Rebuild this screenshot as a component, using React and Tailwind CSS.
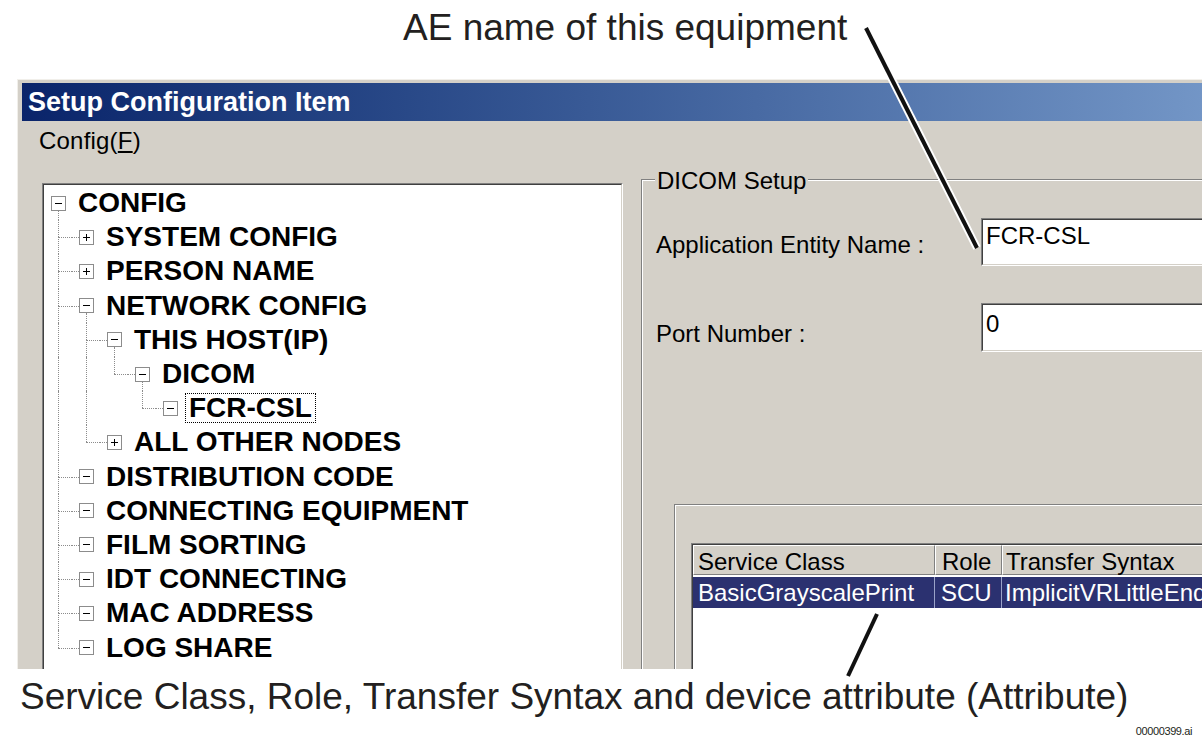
import React from 'react';

const TREE = [
  { d: 0, label: 'CONFIG', plus: false },
  { d: 1, label: 'SYSTEM CONFIG', plus: true },
  { d: 1, label: 'PERSON NAME', plus: true },
  { d: 1, label: 'NETWORK CONFIG', plus: false },
  { d: 2, label: 'THIS HOST(IP)', plus: false },
  { d: 3, label: 'DICOM', plus: false },
  { d: 4, label: 'FCR-CSL', plus: false, focus: true },
  { d: 2, label: 'ALL OTHER NODES', plus: true },
  { d: 1, label: 'DISTRIBUTION CODE', plus: false },
  { d: 1, label: 'CONNECTING EQUIPMENT', plus: false },
  { d: 1, label: 'FILM SORTING', plus: false },
  { d: 1, label: 'IDT CONNECTING', plus: false },
  { d: 1, label: 'MAC ADDRESS', plus: false },
  { d: 1, label: 'LOG SHARE', plus: false },
];

// does node j have a later sibling?
const hasNext = (j) => {
  const d = TREE[j].d;
  for (let m = j + 1; m < TREE.length; m++) {
    if (TREE[m].d < d) return false;
    if (TREE[m].d === d) return true;
  }
  return false;
};

const ancestorAt = (i, k) => {
  for (let j = i; j >= 0; j--) if (TREE[j].d === k) return j;
  return -1;
};

const VLine = ({ part }) => {
  const pos = part === 'top' ? 'top-0 h-1/2' : part === 'bottom' ? 'top-1/2 bottom-0' : 'inset-y-0';
  return <div className={`absolute left-[14px] w-0 border-l border-dotted border-[#8c8c8c] ${pos}`} />;
};

const Box = ({ plus }) => (
  <svg width="15" height="15" viewBox="0 0 15 15" className="relative ml-[7px]">
    <rect x="0.5" y="0.5" width="14" height="14" fill="#fff" stroke="#8c8c8c" />
    <path d="M4 7.5h7" stroke="#000" />
    {plus && <path d="M7.5 4v7" stroke="#000" />}
  </svg>
);

const TreeRow = ({ node, i }) => {
  const cells = [];
  for (let c = 0; c < node.d; c++) {
    if (c === node.d - 1) {
      cells.push(
        <div key={c} className="relative w-[28px] h-full shrink-0">
          <VLine part="top" />
          {hasNext(i) && <VLine part="bottom" />}
          <div className="absolute left-[14px] right-0 top-1/2 h-0 border-t border-dotted border-[#8c8c8c]" />
        </div>
      );
    } else {
      cells.push(
        <div key={c} className="relative w-[28px] h-full shrink-0">
          {hasNext(ancestorAt(i, c + 1)) && <VLine part="full" />}
        </div>
      );
    }
  }
  const hasChild = TREE[i + 1] && TREE[i + 1].d === node.d + 1;
  return (
    <div className="flex items-center h-[34.2px]">
      {cells}
      <div className="relative w-[28px] h-full shrink-0 flex items-center">
        {node.d > 0 && <div className="absolute left-0 w-[7px] top-1/2 h-0 border-t border-dotted border-[#8c8c8c]" />}
        {hasChild && <div className="absolute left-[14px] top-[calc(50%+7px)] bottom-0 w-0 border-l border-dotted border-[#8c8c8c]" />}
        <Box plus={node.plus} />
      </div>
      {node.focus ? (
        <span className="ml-[1px] px-[3px] border border-dotted border-black font-bold text-[28px] leading-[28px] whitespace-nowrap">
          {node.label}
        </span>
      ) : (
        <span className="ml-[6px] font-bold text-[28px] leading-[28px] whitespace-nowrap">{node.label}</span>
      )}
    </div>
  );
};

const Sunken = ({ className = '', inner = '', children }) => (
  <div className={`border border-t-[#808080] border-l-[#808080] border-r-white border-b-white ${className}`}>
    <div className={`h-full border border-t-[#404040] border-l-[#404040] border-r-[#d4d0c8] border-b-[#d4d0c8] bg-white ${inner}`}>
      {children}
    </div>
  </div>
);

const Etched = ({ className = '', inner = '', children }) => (
  <div className={`border-t border-l border-[#808080] ${className}`}>
    <div className={`h-full border-t border-l border-white ${inner}`}>{children}</div>
  </div>
);

const HeadCell = ({ w, pl, children }) => (
  <div
    className={`${w} h-full shrink-0 border border-t-white border-l-white border-r-[#808080] border-b-[#808080] bg-[#d4d0c8] ${pl} pt-[2px] text-[24px] leading-[28px] whitespace-nowrap`}
  >
    {children}
  </div>
);

const RowCell = ({ w, pl, children }) => (
  <div className={`${w} h-full shrink-0 border-r border-[#9aa2c8] ${pl} pt-[2px] text-[24px] leading-[28px] whitespace-nowrap overflow-hidden`}>
    {children}
  </div>
);

const Window = () => (
  <div className="ml-[17px] w-[1260px] h-[590px] bg-[#d4d0c8] border-t border-l border-[#f1efea] pt-[3px] pl-[4px] flex flex-col overflow-hidden">
    {/* title bar */}
    <div className="h-[38px] shrink-0 bg-linear-to-r from-[#0a246a] to-[#7a9dcc] pl-[6px] flex items-center">
      <span className="text-white font-bold text-[27px] leading-[30px]">Setup Configuration Item</span>
    </div>

    {/* menu */}
    <div className="h-[58px] shrink-0 pl-[17px] pt-[6px] text-[24px] leading-[28px] tracking-[0.2px]">
      Config(<span className="underline underline-offset-2">F</span>)
    </div>

    {/* body */}
    <div className="flex flex-1 min-h-0">
      {/* tree view */}
      <Sunken className="ml-[20px] mt-[4px] w-[581px] h-[500px] shrink-0" inner="pl-[0px] pt-[1px]">
        {TREE.map((n, i) => (
          <TreeRow key={n.label} node={n} i={i} />
        ))}
      </Sunken>

      {/* DICOM Setup group */}
      <Etched className="relative ml-[18px] flex-1 h-[500px]" inner="pl-[13px] pt-[37px]">
        <div className="absolute -top-[13px] left-[13px] px-[2px] bg-[#d4d0c8] text-[24px] leading-[28px]">
          DICOM Setup
        </div>

        <div className="flex">
          <div className="w-[325px] shrink-0 pt-[13px] text-[24px] leading-[28px] whitespace-nowrap">
            Application Entity Name :
          </div>
          <Sunken className="flex-1 h-[48px]" inner="pl-[3px] pt-[2px] text-[24px] leading-[28px]">
            FCR-CSL
          </Sunken>
        </div>

        <div className="flex mt-[37px]">
          <div className="w-[325px] shrink-0 pt-[17px] text-[24px] leading-[28px] whitespace-nowrap">
            Port Number :
          </div>
          <Sunken className="flex-1 h-[49px]" inner="pl-[3px] pt-[5px] text-[24px] leading-[28px]">
            0
          </Sunken>
        </div>

        {/* attribute group */}
        <Etched className="ml-[18px] mt-[152px] h-[200px]" inner="pl-[15px] pt-[37px]">
          <Sunken className="h-[200px]" inner="bg-white">
            <div className="flex h-[30px]">
              <HeadCell w="w-[242px]" pl="pl-[4px]">Service Class</HeadCell>
              <HeadCell w="w-[67px]" pl="pl-[6px]">Role</HeadCell>
              <HeadCell w="w-[300px]" pl="pl-[3px]">Transfer Syntax</HeadCell>
            </div>
            <div className="flex h-[31px] mt-[2px] bg-[#2b3170] text-white">
              <RowCell w="w-[242px]" pl="pl-[5px]">BasicGrayscalePrint</RowCell>
              <RowCell w="w-[67px]" pl="pl-[6px]">SCU</RowCell>
              <RowCell w="w-[300px]" pl="pl-[3px]">ImplicitVRLittleEndian</RowCell>
            </div>
          </Sunken>
        </Etched>
      </Etched>
    </div>
  </div>
);

export default function App() {
  return (
    <div className="relative w-[1202px] h-[749px] overflow-hidden bg-white text-black font-['Liberation_Sans',Arial,sans-serif]">
      <div className="h-[79px] pl-[403px] pt-[7px] text-[37px] leading-[42px] text-[#231f20]">
        AE name of this equipment
      </div>

      <Window />

      <div className="pl-[20px] pt-[7px] text-[37px] leading-[42px] text-[#231f20] whitespace-nowrap">
        Service Class, Role, Transfer Syntax and device attribute (Attribute)
      </div>
      <div className="flex justify-end pr-[10px] pt-[7px] text-[11px] leading-[13px] tracking-[-0.4px] text-[#231f20]">
        00000399.ai
      </div>

      {/* callout leaders */}
      <svg className="absolute inset-0 pointer-events-none" width="1202" height="749">
        <g strokeLinecap="butt">
          <path d="M866 28 L977 248" stroke="#fff" strokeWidth="8" />
          <path d="M866 28 L977 248" stroke="#111" strokeWidth="4" />
          <path d="M877 614 L848 676" stroke="#fff" strokeWidth="8" />
          <path d="M877 614 L848 676" stroke="#111" strokeWidth="4" />
        </g>
      </svg>
    </div>
  );
}
